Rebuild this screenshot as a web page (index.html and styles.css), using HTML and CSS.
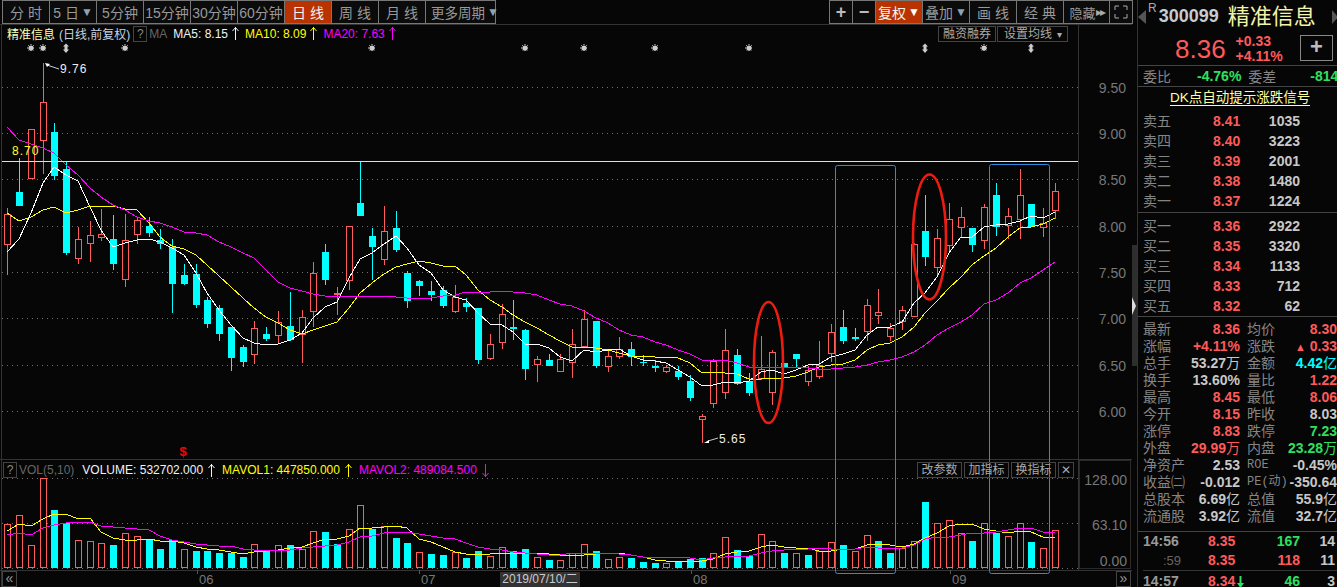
FILE: index.html
```html
<!DOCTYPE html>
<html lang="zh-CN">
<head>
    <meta charset="UTF-8">
    <title>精准信息 300099</title>
    <link rel="stylesheet" href="styles.css">
</head>
<body>
    <div class="app">
        <div class="main">
            <svg id="chart" class="canvas" width="1132" height="587" viewBox="0 0 1132 587"></svg>

            <div class="toolbar">
                <div class="tool_group">
                    <span class="tool">分 时</span>
                    <span class="tool">5 日<i class="caret">▼</i></span>
                    <span class="tool">5分钟</span>
                    <span class="tool">15分钟</span>
                    <span class="tool">30分钟</span>
                    <span class="tool">60分钟</span>
                    <span class="tool active wide_text">日 线</span>
                    <span class="tool">周 线</span>
                    <span class="tool">月 线</span>
                    <span class="tool more">更多周期<i class="caret">▼</i></span>
                </div>
                <div class="tool_group">
                    <span class="tool small sign">+</span>
                    <span class="tool small sign">−</span>
                    <span class="tool active">复权<i class="caret white">▼</i></span>
                    <span class="tool">叠加<i class="caret">▼</i></span>
                    <span class="tool">画 线</span>
                    <span class="tool">经 典</span>
                    <span class="tool narrow">隐藏<i class="skip">▸▸</i></span>
                    <span class="tool small">
                        <svg width="14" height="14" viewBox="0 0 14 14" fill="none" stroke="#aaa"><path d="M1 5V1h4M9 1h4v4M13 9v4H9M5 13H1V9"/></svg>
                    </span>
                </div>
            </div>

            <div class="legend price_legend">
                <span class="stock_name">精准信息</span>
                <span class="stock_mode">(日线,前复权)</span>
                <span class="help">?</span>
                <span class="grey_label">MA</span>
                <span class="ma white_text">MA5: 8.15<svg class="arrow" width="7" height="13" viewBox="0 0 7 13"><path d="M3.5 0V13M.5 4L3.5 .5L6.5 4"/></svg></span>
                <span class="ma yellow_text">MA10: 8.09<svg class="arrow" width="7" height="13" viewBox="0 0 7 13"><path d="M3.5 0V13M.5 4L3.5 .5L6.5 4"/></svg></span>
                <span class="ma pink_text">MA20: 7.63<svg class="arrow" width="7" height="13" viewBox="0 0 7 13"><path d="M3.5 0V13M.5 4L3.5 .5L6.5 4"/></svg></span>
                <span class="legend_btns">
                    <span class="mini_btn">融资融券</span>
                    <span class="mini_btn select">设置均线<i class="mini_caret">▾</i></span>
                </span>
            </div>

            <div class="spacer_main"></div>

            <div class="legend vol_legend">
                <span class="help">?</span>
                <span class="grey_label">VOL(5,10)</span>
                <span class="ma white_text">VOLUME: 532702.000<svg class="arrow" width="7" height="13" viewBox="0 0 7 13"><path d="M3.5 0V13M.5 4L3.5 .5L6.5 4"/></svg></span>
                <span class="ma yellow_text">MAVOL1: 447850.000<svg class="arrow" width="7" height="13" viewBox="0 0 7 13"><path d="M3.5 0V13M.5 4L3.5 .5L6.5 4"/></svg></span>
                <span class="ma pink_text">MAVOL2: 489084.500<svg class="arrow" width="7" height="13" viewBox="0 0 7 13"><path d="M3.5 0V13M.5 9L3.5 12.5L6.5 9"/></svg></span>
                <span class="legend_btns vol_btns">
                    <span class="mini_btn">改参数</span>
                    <span class="mini_btn">加指标</span>
                    <span class="mini_btn">换指标</span>
                    <span class="mini_btn close">✕</span>
                </span>
            </div>

            <div class="spacer_vol"></div>

            <div class="xaxis">
                <span class="page_btn">«</span>
                <span class="date_tip">2019/07/10/二</span>
                <span class="page_btn">»</span>
            </div>
        </div>

        <div class="side_strip">
            <div class="strip_thumb"><span class="strip_arrow"></span></div>
        </div>

        <div class="panel">
            <div class="head">
                <span class="nav_arrow left"></span>
                <sup class="mark">R</sup>
                <span class="code">300099</span>
                <span class="name">精准信息</span>
                <span class="nav_arrow right"></span>
            </div>

            <div class="price_row">
                <span class="price">8.36</span>
                <span class="change"><b>+0.33</b><b>+4.11%</b></span>
                <span class="plus_box">+</span>
            </div>

            <div class="ratio_row">
                <span class="lbl">委比</span>
                <span class="num green ratio_val">-4.76%</span>
                <span class="lbl ratio_lbl">委差</span>
                <span class="num green ratio_end">-814</span>
            </div>

            <div class="signal"><span>DK点自动提示涨跌信号</span></div>

            <div class="book asks">
                <div class="book_row"><span class="lbl">卖五</span><span class="num red">8.41</span><span class="num light end">1035</span></div>
                <div class="book_row"><span class="lbl">卖四</span><span class="num red">8.40</span><span class="num light end">3223</span></div>
                <div class="book_row"><span class="lbl">卖三</span><span class="num red">8.39</span><span class="num light end">2001</span></div>
                <div class="book_row"><span class="lbl">卖二</span><span class="num red">8.38</span><span class="num light end">1480</span></div>
                <div class="book_row"><span class="lbl">卖一</span><span class="num red">8.37</span><span class="num light end">1224</span></div>
            </div>

            <div class="book bids">
                <div class="book_row"><span class="lbl">买一</span><span class="num red">8.36</span><span class="num light end">2922</span></div>
                <div class="book_row"><span class="lbl">买二</span><span class="num red">8.35</span><span class="num light end">3320</span></div>
                <div class="book_row"><span class="lbl">买三</span><span class="num red">8.34</span><span class="num light end">1133</span></div>
                <div class="book_row"><span class="lbl">买四</span><span class="num red">8.33</span><span class="num light end">712</span></div>
                <div class="book_row"><span class="lbl">买五</span><span class="num red">8.32</span><span class="num light end">62</span></div>
            </div>

            <div class="stats">
                <div class="stat_row">
                    <div class="stat"><span class="lbl">最新</span><span class="num red">8.36</span></div>
                    <div class="stat"><span class="lbl">均价</span><span class="num red">8.30</span></div>
                </div>
                <div class="stat_row">
                    <div class="stat"><span class="lbl">涨幅</span><span class="num red">+4.11%</span></div>
                    <div class="stat"><span class="lbl">涨跌</span><span class="num red"><i class="up_mark">▲</i> 0.33</span></div>
                </div>
                <div class="stat_row">
                    <div class="stat"><span class="lbl">总手</span><span class="num light">53.27<i>万</i></span></div>
                    <div class="stat"><span class="lbl">金额</span><span class="num cyan">4.42<i>亿</i></span></div>
                </div>
                <div class="stat_row">
                    <div class="stat"><span class="lbl">换手</span><span class="num light">13.60%</span></div>
                    <div class="stat"><span class="lbl">量比</span><span class="num red">1.22</span></div>
                </div>
                <div class="stat_row">
                    <div class="stat"><span class="lbl">最高</span><span class="num red">8.45</span></div>
                    <div class="stat"><span class="lbl">最低</span><span class="num red">8.06</span></div>
                </div>
                <div class="stat_row">
                    <div class="stat"><span class="lbl">今开</span><span class="num red">8.15</span></div>
                    <div class="stat"><span class="lbl">昨收</span><span class="num light">8.03</span></div>
                </div>
                <div class="stat_row">
                    <div class="stat"><span class="lbl">涨停</span><span class="num red">8.83</span></div>
                    <div class="stat"><span class="lbl">跌停</span><span class="num green">7.23</span></div>
                </div>
                <div class="stat_row">
                    <div class="stat"><span class="lbl">外盘</span><span class="num red">29.99<i>万</i></span></div>
                    <div class="stat"><span class="lbl">内盘</span><span class="num green">23.28<i>万</i></span></div>
                </div>
                <div class="stat_row">
                    <div class="stat"><span class="lbl">净资产</span><span class="num light">2.53</span></div>
                    <div class="stat"><span class="lbl mono_lbl">ROE</span><span class="num light">-0.45%</span></div>
                </div>
                <div class="stat_row">
                    <div class="stat"><span class="lbl">收益㈡</span><span class="num light">-0.012</span></div>
                    <div class="stat"><span class="lbl mono_lbl">PE(动)</span><span class="num light">-350.64</span></div>
                </div>
                <div class="stat_row">
                    <div class="stat"><span class="lbl">总股本</span><span class="num light">6.69<i>亿</i></span></div>
                    <div class="stat"><span class="lbl">总值</span><span class="num light">55.9<i>亿</i></span></div>
                </div>
                <div class="stat_row">
                    <div class="stat"><span class="lbl">流通股</span><span class="num light">3.92<i>亿</i></span></div>
                    <div class="stat"><span class="lbl">流值</span><span class="num light">32.7<i>亿</i></span></div>
                </div>
            </div>

            <div class="ticks">
                <div class="tick_row"><span class="num time">14:56</span><span class="num red">8.35</span><span class="num green end">167</span><span class="num light end">14</span></div>
                <div class="tick_row last_minute"><span class="num time sec">:59</span><span class="num red">8.35</span><span class="num red end">118</span><span class="num light end">11</span></div>
                <div class="tick_row tick_short"><span class="num time">14:57</span><span class="num red tick_down">8.34<svg class="down_mark" width="7" height="12" viewBox="0 0 7 12"><path d="M2.5 0h2v7h2.500l-3.500 5l-3.500-5h2.500z"/></svg></span><span class="num green end">46</span><span class="num light end">3</span></div>
            </div>
        </div>
    </div>

    <script src="chart.js"></script>
</body>
</html>
```

FILE: styles.css
```css
* {
    box-sizing: border-box;
}

body {
    margin: 0;
    background: #060606;
    font-family: "Liberation Sans", "Noto Sans CJK SC", sans-serif;
    color: #999;
    overflow: hidden;
}

i {
    font-style: normal;
}

.app {
    display: flex;
    width: 1337px;
    height: 587px;
    overflow: hidden;
}

/* left side: toolbar and charts */
.main {
    position: relative;
    display: flex;
    flex-direction: column;
    width: 1132px;
    height: 587px;
}

.canvas {
    position: absolute;
    left: 0;
    top: 0;
}

.canvas text {
    font-family: "Liberation Sans", sans-serif;
}

.toolbar {
    position: relative;
    display: flex;
    justify-content: space-between;
    height: 24px;
    padding-left: 2px;
}

.tool_group {
    display: flex;
}

.tool {
    display: flex;
    align-items: center;
    justify-content: center;
    width: 48px;
    height: 24px;
    margin-right: -1px;
    border: 1px solid #777;
    background: #0b0b0b;
    color: #999;
    font-size: 14px;
    white-space: nowrap;
}

.tool.active {
    background: #b83300;
    color: #f4f4f4;
}

.tool.small {
    width: 24px;
}

.tool.narrow {
    width: 47px;
    font-size: 13px;
}

.tool.more {
    width: 71px;
    justify-content: flex-start;
    padding-left: 5px;
    font-size: 13.5px;
}

.sign {
    color: #bbb;
    font-size: 18px;
    font-weight: bold;
}

.caret {
    margin-left: 2px;
    color: #8fa3b5;
    font-size: 12px;
}

.caret.white {
    color: #fff;
}

.skip {
    color: #aaa;
    font-size: 12px;
    letter-spacing: -2px;
}

.legend {
    position: relative;
    display: flex;
    align-items: center;
    height: 19px;
    padding-left: 7px;
    font-size: 12px;
    white-space: nowrap;
}

.stock_name {
    color: #ffffb0;
    font-size: 12px;
}

.stock_mode {
    margin-left: 4px;
    color: #c4d4e4;
    font-size: 12px;
}

.help {
    width: 14px;
    height: 16px;
    margin: 0 2px 0 3px;
    border: 1px solid #444;
    color: #888;
    font-size: 12px;
    line-height: 14px;
    text-align: center;
}

.grey_label {
    color: #666;
}

.ma {
    display: flex;
    align-items: center;
    margin-left: 7px;
}

.arrow {
    margin-left: 5px;
    fill: none;
    stroke: currentColor;
}

.price_legend .ma {
    margin-left: 6px;
}

.price_legend .ma:first-of-type {
    margin-left: 7px;
}

.price_legend .arrow {
    margin-left: 4px;
}

.white_text {
    color: #eef4fa;
}

.yellow_text {
    color: #ffff00;
}

.pink_text {
    color: #ff00ff;
}

.legend_btns {
    display: flex;
    gap: 1px;
    margin-left: auto;
    margin-right: 64px;
}

.mini_btn {
    display: block;
    height: 16px;
    padding: 0 4px;
    border: 1px solid #444;
    color: #aaa;
    font-size: 12px;
    line-height: 14px;
}

.mini_btn.select {
    width: 71px;
    padding-left: 6px;
}

.mini_caret {
    margin-left: 5px;
    font-size: 10px;
}

.spacer_main {
    flex: 1;
}

.vol_legend {
    height: 18px;
    padding-left: 0;
    margin-left: 3px;
}

.vol_legend .help {
    margin-left: 0;
    margin-right: 2px;
}

.vol_legend .grey_label {
    margin-right: 1px;
}

.vol_btns {
    gap: 2px;
    margin-right: 58px;
}

.vol_btns .mini_btn {
    width: 45px;
    padding: 0;
    text-align: center;
}

.vol_btns .close {
    width: 16px;
}

.spacer_vol {
    height: 92px;
}

.xaxis {
    position: relative;
    display: flex;
    justify-content: space-between;
    height: 16px;
    padding: 0 1px 0 2px;
}

.page_btn {
    width: 15px;
    height: 16px;
    border: 1px solid #444;
    color: #999;
    font-size: 14px;
    line-height: 13px;
    text-align: center;
}

/* crosshair date tag sits over the axis */
.date_tip {
    position: absolute;
    left: 500px;
    top: 1px;
    width: 80px;
    height: 15px;
    background: #333;
    color: #ccc;
    font-size: 12px;
    line-height: 15px;
    text-align: center;
    white-space: nowrap;
}

/* scroll strip between chart and quote panel */
.side_strip {
    width: 6px;
    padding-top: 245px;
    border-right: 1px solid #333;
}

.strip_thumb {
    display: flex;
    align-items: center;
    height: 121px;
    background: #2e2e2e;
}

.strip_arrow {
    width: 0;
    height: 0;
    border-top: 9px solid transparent;
    border-bottom: 9px solid transparent;
    border-left: 4px solid #ddd;
}

/* right side: quote panel */
.panel {
    width: 199px;
    height: 587px;
    overflow: hidden;
    font-size: 14px;
    white-space: nowrap;
}

.head {
    position: relative;
    display: flex;
    align-items: center;
    height: 33px;
}

.nav_arrow {
    flex: none;
    width: 0;
    height: 0;
    border-top: 7px solid transparent;
    border-bottom: 7px solid transparent;
}

.nav_arrow.left {
    border-right: 8px solid #555;
}

.nav_arrow.right {
    margin-left: 16px;
    border-left: 6px solid #555;
}

.mark {
    align-self: flex-start;
    margin: 2px 0 0 2px;
    color: #aaa;
    font-size: 12px;
    line-height: 12px;
}

.code {
    margin-left: 2px;
    color: #c4ccd4;
    font-size: 18px;
    font-weight: bold;
}

.name {
    margin-left: 9px;
    color: #f2f2a8;
    font-size: 22px;
    line-height: 33px;
}

.price_row {
    display: flex;
    align-items: center;
    height: 33px;
    border-bottom: 1px solid #444;
}

.price {
    margin-left: 37px;
    color: #ff5a5a;
    font-size: 26px;
}

.change {
    display: flex;
    flex-direction: column;
    margin-left: 10px;
    color: #ff5a5a;
    font-size: 14px;
    line-height: 15px;
}

.plus_box {
    width: 33px;
    height: 26px;
    margin: -2px 4px 0 auto;
    border: 1px solid #888;
    color: #bbb;
    font-size: 22px;
    font-weight: bold;
    line-height: 22px;
    text-align: center;
}

.ratio_row {
    display: flex;
    align-items: center;
    height: 21px;
    padding-left: 5px;
    border-bottom: 1px solid #444;
}

.ratio_val {
    margin-left: 26px;
}

.ratio_lbl {
    margin-left: 7px;
}

.ratio_end {
    margin-left: 34px;
}

.signal {
    height: 24px;
    padding-left: 32px;
    color: #ffffa0;
    font-size: 13.5px;
    line-height: 22px;
}

.signal span {
    border-bottom: 1px solid #ffffa0;
}

.lbl {
    color: #858585;
    font-size: 14px;
}

.mono_lbl {
    font-family: "Liberation Mono", "Noto Sans CJK SC", monospace;
    font-size: 12px;
}

.num {
    font-size: 14px;
    font-weight: bold;
}

.num i {
    font-weight: normal;
}

.end {
    text-align: right;
}

.red {
    color: #ff5a5a;
}

.green {
    color: #2fe060;
}

.cyan {
    color: #00ffff;
}

.light {
    color: #c8c8c8;
}

.book {
    padding-left: 5px;
    border-bottom: 1px solid #444;
}

.asks {
    height: 102px;
}

.bids {
    height: 104px;
    padding-top: 3px;
}

.book_row {
    display: grid;
    grid-template-columns: 70px 40px 47px;
    grid-auto-rows: 20px;
    align-items: center;
    height: 20px;
    line-height: 20px;
}

.stats {
    height: 215px;
    padding: 4px 0 0 5px;
    border-bottom: 1px solid #444;
}

.stat_row {
    display: grid;
    grid-template-columns: 97px 90px;
    grid-auto-rows: 17px;
    column-gap: 7px;
    height: 17px;
    line-height: 17px;
}

.stat {
    display: flex;
    align-items: center;
    justify-content: space-between;
}

.up_mark {
    font-size: 11px;
}

.ticks {
    padding-left: 5px;
}

.tick_row {
    display: grid;
    grid-template-columns: 65px 40px 52px 35px;
    align-items: center;
    height: 19px;
    line-height: 19px;
}

.last_minute {
    height: 20px;
    border-bottom: 1px solid #333;
}

.tick_short {
    height: 21px;
}

.tick_down {
    display: flex;
    align-items: center;
}

.time {
    color: #999;
}

.sec {
    padding-left: 20px;
    color: #666;
    font-weight: normal;
    font-size: 13px;
}

.down_mark {
    flex: none;
    margin-left: 2px;
    fill: #2fe060;
}
```

FILE: chart.js
```js
// up, high, body top, body bottom, low (all in pixels)
const candles = [
    [1,208,214,245,275],[0,158,192,206,206],[1,129,129,179,179],[1,63,102,141,174],[0,123,132,176,180],
    [0,162,169,253,255],[1,227,239,259,264],[1,221,235,244,262],[1,209,234,238,241],[0,215,239,264,270],
    [1,214,240,280,287],[1,217,220,235,244],[0,217,226,233,237],[0,229,240,244,249],[0,239,247,284,313],
    [0,264,275,284,285],[0,264,274,305,308],[0,297,300,324,328],[0,305,308,334,341],[0,327,327,358,371],
    [0,345,347,362,367],[1,321,328,355,364],[0,327,334,339,341],[1,311,322,336,343],[0,292,326,340,341],
    [1,310,317,335,363],[1,262,273,312,327],[0,244,252,280,285],[1,287,293,295,315],[1,226,226,281,290],
    [0,162,203,216,216],[0,228,236,247,280],[1,206,231,260,265],[0,211,228,250,252],[0,271,273,301,308],
    [0,280,281,286,296],[0,281,291,295,301],[0,286,290,306,308],[1,285,297,312,313],[0,298,303,307,312],
    [0,308,308,360,364],[1,334,344,359,360],[1,304,314,343,349],[0,300,327,329,340],[0,329,330,369,380],
    [1,356,359,365,382],[0,354,360,366,366],[1,354,359,372,372],[1,329,344,363,378],[1,310,319,347,348],
    [0,321,321,366,368],[1,349,356,367,372],[1,337,349,357,359],[0,342,349,357,366],[0,355,362,363,366],
    [0,360,366,368,372],[1,365,367,372,373],[0,366,371,377,380],[0,375,381,398,401],[1,414,416,420,443],
    [1,359,361,404,408],[1,329,350,393,399],[0,349,355,384,385],[0,373,381,393,396],[1,336,369,379,380],
    [1,350,352,393,405],[0,363,363,367,368],[0,354,354,359,368],[1,366,370,382,386],[1,341,365,377,379],
    [1,324,332,354,362],[0,310,327,341,344],[0,328,337,339,341],[1,299,305,332,341],[1,289,312,316,324],
    [1,323,328,337,341],[1,306,310,322,330],[1,243,244,317,317],[0,195,231,257,266],[1,229,238,268,277],
    [1,203,219,246,252],[1,207,217,228,237],[0,228,228,245,252],[1,204,207,241,249],[0,183,195,227,236],
    [1,208,216,226,239],[1,169,195,220,239],[0,204,204,227,227],[1,208,223,228,237],[1,183,191,211,219]
];

const ma5 = [252,239,213,183,167,175,181,207,230,247,243,240,239,242,248,255,273,293,310,325,338,343,345,344,340,333,318,307,302,278,259,253,244,236,248,265,273,290,297,300,313,324,325,332,344,344,348,357,361,350,352,350,349,356,360,361,363,370,377,386,385,382,383,381,372,370,374,370,365,364,357,354,350,335,327,327,322,303,293,277,253,237,237,227,225,224,221,216,218,212];
const ma10 = [213,221,217,210,207,213,210,206,206,206,209,210,223,237,246,249,255,265,276,287,298,308,317,323,330,334,330,326,322,308,293,283,274,267,264,261,263,266,266,275,290,300,307,315,322,328,335,341,347,347,348,350,353,356,356,357,357,358,363,373,372,373,374,379,379,378,378,376,372,367,365,364,360,350,345,343,337,327,313,301,288,277,265,256,248,237,228,227,224,218];
const ma20 = [127,140,144,148,153,165,175,188,197,205,210,217,221,223,227,232,233,235,242,247,253,258,270,282,288,291,294,296,297,296,296,297,296,297,298,298,298,296,295,292,292,292,291,292,293,295,300,304,306,311,318,323,330,335,337,342,345,350,354,360,360,360,363,367,367,367,367,367,368,369,369,368,367,365,362,360,357,352,345,335,328,322,315,304,300,293,283,278,270,262];

const volTop = [524,515,545,478,510,523,540,541,543,545,533,536,540,549,540,549,551,551,553,553,557,544,551,545,545,549,531,532,544,529,505,529,526,538,543,552,554,555,552,558,551,556,547,551,549,557,560,560,553,544,551,559,557,558,562,563,563,561,559,558,553,537,550,556,534,541,553,553,555,551,542,545,551,535,541,553,548,541,502,523,520,533,541,523,533,536,523,542,548,530];
const volKind = 'rrrrccrrrcrrcccrcccccrcrcrrccrrcrccrccrccrrccrcrrrcrrcccrcccrrccrrcrcrrcrrccrrcrrrcrcrrcrr';
const mavol1 = [531,524,526,519,514,514,519,518,532,538,540,540,539,541,541,543,547,549,550,552,554,552,551,550,548,547,543,539,539,536,528,528,527,526,528,539,542,547,552,554,554,554,553,553,553,553,554,555,556,555,554,553,553,555,557,560,561,561,561,561,559,554,552,551,547,545,547,548,548,551,551,549,549,545,544,545,547,544,538,533,526,524,524,529,531,533,531,532,537,537];
const mavol2 = [535,533,535,528,525,523,522,522,526,527,528,529,530,536,540,542,544,545,546,546,549,550,551,550,550,548,547,546,545,542,537,536,533,532,532,534,536,538,539,543,547,549,550,552,553,554,555,555,553,554,553,553,554,555,557,557,557,557,558,560,558,557,556,556,553,551,550,549,549,548,549,549,549,547,548,548,548,545,539,537,537,535,533,533,532,530,528,528,532,533];

const RED = '#ff5c5c';
const CYAN = '#00ffff';
const GRID = '#333';
const AXIS_TEXT = '#777';

const NS = 'http://www.w3.org/2000/svg';
const svg = document.getElementById('chart');

function add(tag, attrs, text) {
    const el = document.createElementNS(NS, tag);
    for (const key in attrs) {
        el.setAttribute(key, attrs[key]);
    }
    if (text) {
        el.textContent = text;
    }
    svg.appendChild(el);
    return el;
}

function xOf(i) {
    return Math.round(7.3 + 11.77 * i);
}

function hline(y, x1, x2, color) {
    add('rect', { x: x1, y: y, width: x2 - x1, height: 1, fill: color, 'shape-rendering': 'crispEdges' });
}

function vline(x, y1, y2, color) {
    add('rect', { x: x, y: y1, width: 1, height: y2 - y1, fill: color, 'shape-rendering': 'crispEdges' });
}

function dotted(y) {
    add('line', { x1: 2, x2: 1082, y1: y + 0.5, y2: y + 0.5, stroke: '#707070', 'stroke-dasharray': '1 4' });
}

function maLine(values, color) {
    const points = values.map((y, i) => xOf(i) + ',' + y).join(' ');
    add('polyline', { points: points, fill: 'none', stroke: color, 'stroke-width': 1, 'shape-rendering': 'crispEdges' });
}

function bar(i, top, bottom, kind) {
    const x = xOf(i);
    if (kind === 'c') {
        add('rect', { x: x - 3, y: top, width: 7, height: bottom - top, fill: CYAN, 'shape-rendering': 'crispEdges' });
    } else {
        add('rect', {
            x: x - 2.5, y: top + 0.5, width: 6, height: Math.max(bottom - top - 1, 1),
            fill: '#060606', stroke: RED, 'shape-rendering': 'crispEdges'
        });
    }
}

function axisText(x, y, label) {
    add('text', { x: x, y: y, fill: AXIS_TEXT, 'font-size': 14, 'text-anchor': 'end' }, label);
}

function star(x) {
    add('circle', { cx: x, cy: 48, r: 2.6, fill: '#ccc' });
    add('path', { d: `M${x} 44v8M${x - 4} 48h8M${x - 3} 45l6 6M${x + 3} 45l-6 6`, stroke: '#ccc', 'stroke-dasharray': '1 1' });
}

function updown(x) {
    add('path', { d: `M${x} 43.5l3 3h-1.5v3h1.5l-3 3.5l-3-3.5h1.5v-3h-1.5z`, fill: '#ccc' });
}

function priceTag(x, y, label) {
    add('text', { x: x, y: y, fill: '#eee', 'font-size': 12, 'letter-spacing': 1 }, label);
}

// frame
vline(1, 25, 587, GRID);
hline(24, 0, 1132, GRID);
hline(459, 0, 1132, GRID);
hline(570, 0, 1132, GRID);
vline(1078, 25, 570, GRID);
add('rect', { x: 1079.5, y: 460.5, width: 51, height: 108, fill: 'none', stroke: '#2a2a2a' });

// grid and price axis
[[87, '9.50'], [133, '9.00'], [179, '8.50'], [226, '8.00'], [272, '7.50'], [318, '7.00'], [365, '6.50'], [411, '6.00']].forEach(row => {
    dotted(row[0]);
    axisText(1126, row[0] + 6, row[1]);
});
[[478, '128.00', 485], [523, '63.10', 530], [568, '0.00', 566]].forEach(row => {
    dotted(row[0]);
    axisText(1127, row[2], row[1]);
});

// month ticks on the time axis
[[197, '06'], [419, '07'], [691, '08'], [950, '09']].forEach(row => {
    vline(row[0], 570, 574, '#555');
    add('text', { x: row[0] + 2, y: 584, fill: AXIS_TEXT, 'font-size': 13 }, row[1]);
});

// event markers along the top
[31, 43, 125, 372, 525, 584, 655, 749, 984].forEach(star);
[66, 925, 1031].forEach(updown);

// candles
candles.forEach((c, i) => {
    const x = xOf(i);
    const color = c[0] ? RED : CYAN;
    vline(x, c[1], c[2], color);
    vline(x, c[3], Math.max(c[4], c[3]), color);
    bar(i, c[2], c[3], c[0] ? 'r' : 'c');
});

maLine(ma5, '#ffffff');
maLine(ma10, '#ffff00');
maLine(ma20, '#ff00ff');

// reference line
hline(161, 2, 1078, '#f6f633');
add('text', { x: 12, y: 155, fill: '#ffff33', 'font-size': 12, 'letter-spacing': 1 }, '8.70');

// high and low labels
add('path', { d: 'M45 63l5 1l-3 3z', fill: '#fff' });
add('line', { x1: 47, y1: 65, x2: 59, y2: 69, stroke: '#fff', 'stroke-width': 0.8 });
priceTag(60, 73, '9.76');
add('path', { d: 'M704 443l5-3v3z', fill: '#fff' });
add('line', { x1: 708, y1: 441, x2: 718, y2: 438, stroke: '#fff', 'stroke-width': 0.8 });
priceTag(719, 443, '5.65');

add('text', { x: 183, y: 456, fill: '#f00', 'font-size': 13, 'font-weight': 'bold', 'text-anchor': 'middle' }, '$');

// volume
volTop.forEach((top, i) => bar(i, top, 568, volKind[i]));
maLine(mavol1, '#ffff00');
maLine(mavol2, '#ff00ff');

// hand-drawn annotations on the chart
[[835.5, 165, 60], [989.5, 164, 60]].forEach(box => {
    add('rect', { x: box[0], y: box[1] + 0.5, width: box[2], height: 573 - box[1], rx: 2, fill: 'none', stroke: '#2b8be0' });
});
[[768.5, 362.5, 14.5, 60.5], [929.5, 237, 16.5, 62.5]].forEach(e => {
    add('ellipse', { cx: e[0], cy: e[1], rx: e[2], ry: e[3], fill: 'none', stroke: '#ee1c10', 'stroke-width': 2.6 });
});
```
